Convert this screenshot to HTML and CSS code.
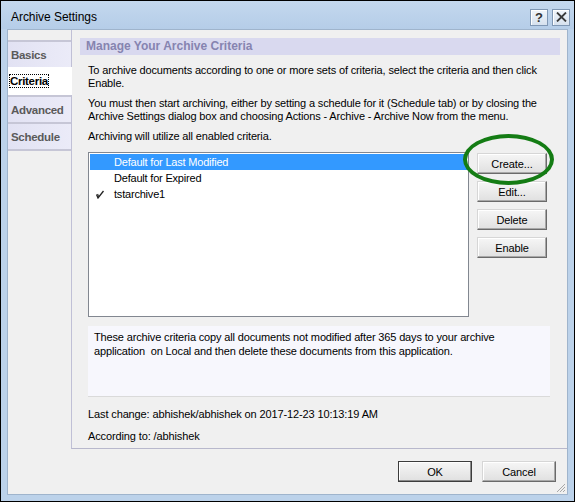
FILE: index.html
```html
<!DOCTYPE html>
<html>
<head>
<meta charset="utf-8">
<link rel="stylesheet" href="styles.css">
</head>
<body>
<div class="window">
  <div class="titlebar">
    <span class="title">Archive Settings</span>
    <div class="tb-buttons">
      <div class="tb-btn help">?</div>
      <div class="tb-btn close">
        <svg width="11" height="10" viewBox="0 0 11 10"><path d="M1 0.5 L10 9.5 M10 0.5 L1 9.5" stroke="#3a3a3a" stroke-width="1.8" fill="none"/></svg>
      </div>
    </div>
  </div>
  <div class="client">
    <div class="main">
      <div class="tabs">
        <div class="tab">Basics</div>
        <div class="tab active"><span class="focus">Criteria</span></div>
        <div class="tab">Advanced</div>
        <div class="tab last">Schedule</div>
      </div>
      <div class="panel">
        <div class="heading">Manage Your Archive Criteria</div>
        <div class="body">
          <p>To archive documents according to one or more sets of criteria, select the criteria and then click<br>Enable.</p>
          <p>You must then start archiving, either by setting a schedule for it (Schedule tab) or by closing the<br>Archive Settings dialog box and choosing Actions - Archive - Archive Now from the menu.</p>
          <p>Archiving will utilize all enabled criteria.</p>
          <div class="list-row">
            <div class="listbox">
              <div class="item selected"><span class="mark"></span>Default for Last Modified</div>
              <div class="item"><span class="mark"></span>Default for Expired</div>
              <div class="item"><span class="mark"><svg width="10" height="10" viewBox="0 0 10 10"><path d="M1.5 5.5 L3 9 L8.5 2" stroke="#222" stroke-width="1.3" fill="none"/><path d="M2.6 5 L3.6 7.6" stroke="#222" stroke-width="1.1" fill="none"/></svg></span>tstarchive1</div>
            </div>
            <div class="side-buttons">
              <div class="btn">Create...</div>
              <div class="btn">Edit...</div>
              <div class="btn">Delete</div>
              <div class="btn">Enable</div>
            </div>
          </div>
          <div class="desc">These archive criteria copy all documents not modified after 365 days to your archive<br>application &nbsp;on Local and then delete these documents from this application.</div>
          <div class="meta first">Last change: abhishek/abhishek on 2017-12-23 10:13:19 AM</div>
          <div class="meta">According to: /abhishek</div>
        </div>
      </div>
    </div>
    <div class="footer">
      <div class="btn wide default">OK</div>
      <div class="btn wide">Cancel</div>
    </div>
    <svg class="grip" width="10" height="10" viewBox="0 0 10 10">
      <path d="M9 1 L1 9 M9 4 L4 9 M9 7 L7 9" stroke="#a8a8a8" stroke-width="1" fill="none"/>
    </svg>
  </div>
  <div class="annotation"></div>
</div>
</body>
</html>
```

FILE: styles.css
```css
html, body {
  margin: 0;
  padding: 0;
  background: #ffffff;
}

.window {
  position: relative;
  width: 575px;
  height: 502px;
  box-sizing: border-box;
  border: 1px solid #000;
  background: #bcd2ea;
  display: flex;
  flex-direction: column;
  padding: 0 6px 6px 6px;
  font-family: "Liberation Sans", Arial, sans-serif;
  font-size: 11px;
  color: #000;
}

.titlebar {
  height: 28px;
  flex: none;
  display: flex;
  align-items: center;
  justify-content: space-between;
  background: linear-gradient(#c4d8ee, #b5cde8);
  margin: 0 -6px;
  padding: 0 4px 0 10px;
}

.title {
  font-size: 12px;
  padding-top: 4px;
  letter-spacing: -0.05px;
}

.tb-buttons {
  display: flex;
  gap: 4px;
  padding-top: 4px;
}

.tb-btn {
  width: 16px;
  height: 15px;
  border: 1px solid #7f97b4;
  background: linear-gradient(#f1f5fa, #d6e1ee);
  box-shadow: inset 1px 1px #ffffff;
  display: flex;
  align-items: center;
  justify-content: center;
  font-weight: bold;
  font-size: 13px;
  color: #333;
}

.client {
  position: relative;
  flex: 1;
  border: 1px solid #9fb4cc;
  background: #f0f0f0;
  display: flex;
  flex-direction: column;
}

.main {
  height: 419px;
  flex: none;
  display: flex;
}

.tabs {
  width: 63px;
  flex: none;
  padding-top: 10px;
}

.tab {
  height: 25px;
  border-top: 2px solid #c6c6d6;
  background: linear-gradient(to right, #e2e2f3, #ebebf8);
  font-weight: bold;
  font-size: 11.5px;
  color: #5a5a5a;
  padding-left: 3px;
  display: flex;
  align-items: center;
  letter-spacing: -0.3px;
}

.tab.active {
  position: relative;
  height: 28px;
  border-top: 0;
  background: #ffffff;
  color: #000;
  margin-right: -1px;
  padding-left: 2px;
}

.tab.last {
  border-bottom: 2px solid #c6c6d6;
}

.focus {
  outline: 1px dotted #000;
  outline-offset: 0;
  line-height: 12px;
}

.panel {
  flex: 1;
  border-left: 1px solid #c0c0d6;
  border-bottom: 1px solid #b8b8cc;
  padding-top: 8px;
}

.heading {
  margin: 0 7px 0 8px;
  height: 17px;
  background: #d9d9ef;
  color: #8684b0;
  font-weight: bold;
  font-size: 12px;
  line-height: 17px;
  padding-left: 6px;
}

.body {
  padding: 9px 0 0 16px;
}

p {
  margin: 0 0 7px;
  line-height: 13px;
  white-space: nowrap;
  letter-spacing: -0.15px;
}

.list-row {
  display: flex;
  margin-top: 9px;
}

.listbox {
  border: 1px solid #828790;
  background: #fff;
  padding: 1px;
  box-sizing: content-box;
  width: 377px;
  height: 161px;
}

.item {
  height: 16px;
  line-height: 16px;
  display: flex;
  align-items: center;
  letter-spacing: -0.2px;
}

.item.selected {
  background: #3399ff;
  color: #fff;
}

.mark {
  width: 24px;
  flex: none;
  display: flex;
  padding-left: 5px;
  box-sizing: border-box;
}

.side-buttons {
  margin-left: 8px;
  padding-top: 1px;
  display: flex;
  flex-direction: column;
  gap: 7px;
}

.btn {
  width: 68px;
  height: 19px;
  border: 1px solid;
  border-color: #d6d6d6 #6a6a6a #6a6a6a #d6d6d6;
  box-shadow: inset -1px -1px #a8a8a8, inset 1px 1px #ffffff;
  background: linear-gradient(#f6f6f6, #e0e0e0);
  display: flex;
  align-items: center;
  justify-content: center;
  letter-spacing: -0.1px;
}

.desc {
  margin-top: 9px;
  width: 456px;
  height: 66px;
  padding: 4px 0 0 6px;
  background: #f7f7fd;
  border-bottom: 1px solid #dadada;
  line-height: 14px;
  white-space: nowrap;
  letter-spacing: -0.15px;
}

.meta {
  margin-top: 9px;
  line-height: 13px;
  letter-spacing: -0.12px;
}

.meta.first {
  margin-top: 11px;
}

.footer {
  flex: 1;
  display: flex;
  justify-content: flex-end;
  gap: 10px;
  padding: 12px 11px 0 0;
}

.btn.wide {
  width: 72px;
}

.btn.default {
  border-color: #3c3c3c;
  box-shadow: inset -1px -1px #8a8a8a, inset 1px 1px #ffffff;
}

.grip {
  position: absolute;
  right: 1px;
  bottom: 1px;
}

.annotation {
  position: absolute;
  left: 462px;
  top: 133px;
  width: 83px;
  height: 43px;
  border: 4px solid #147c14;
  border-radius: 50%;
}
```
